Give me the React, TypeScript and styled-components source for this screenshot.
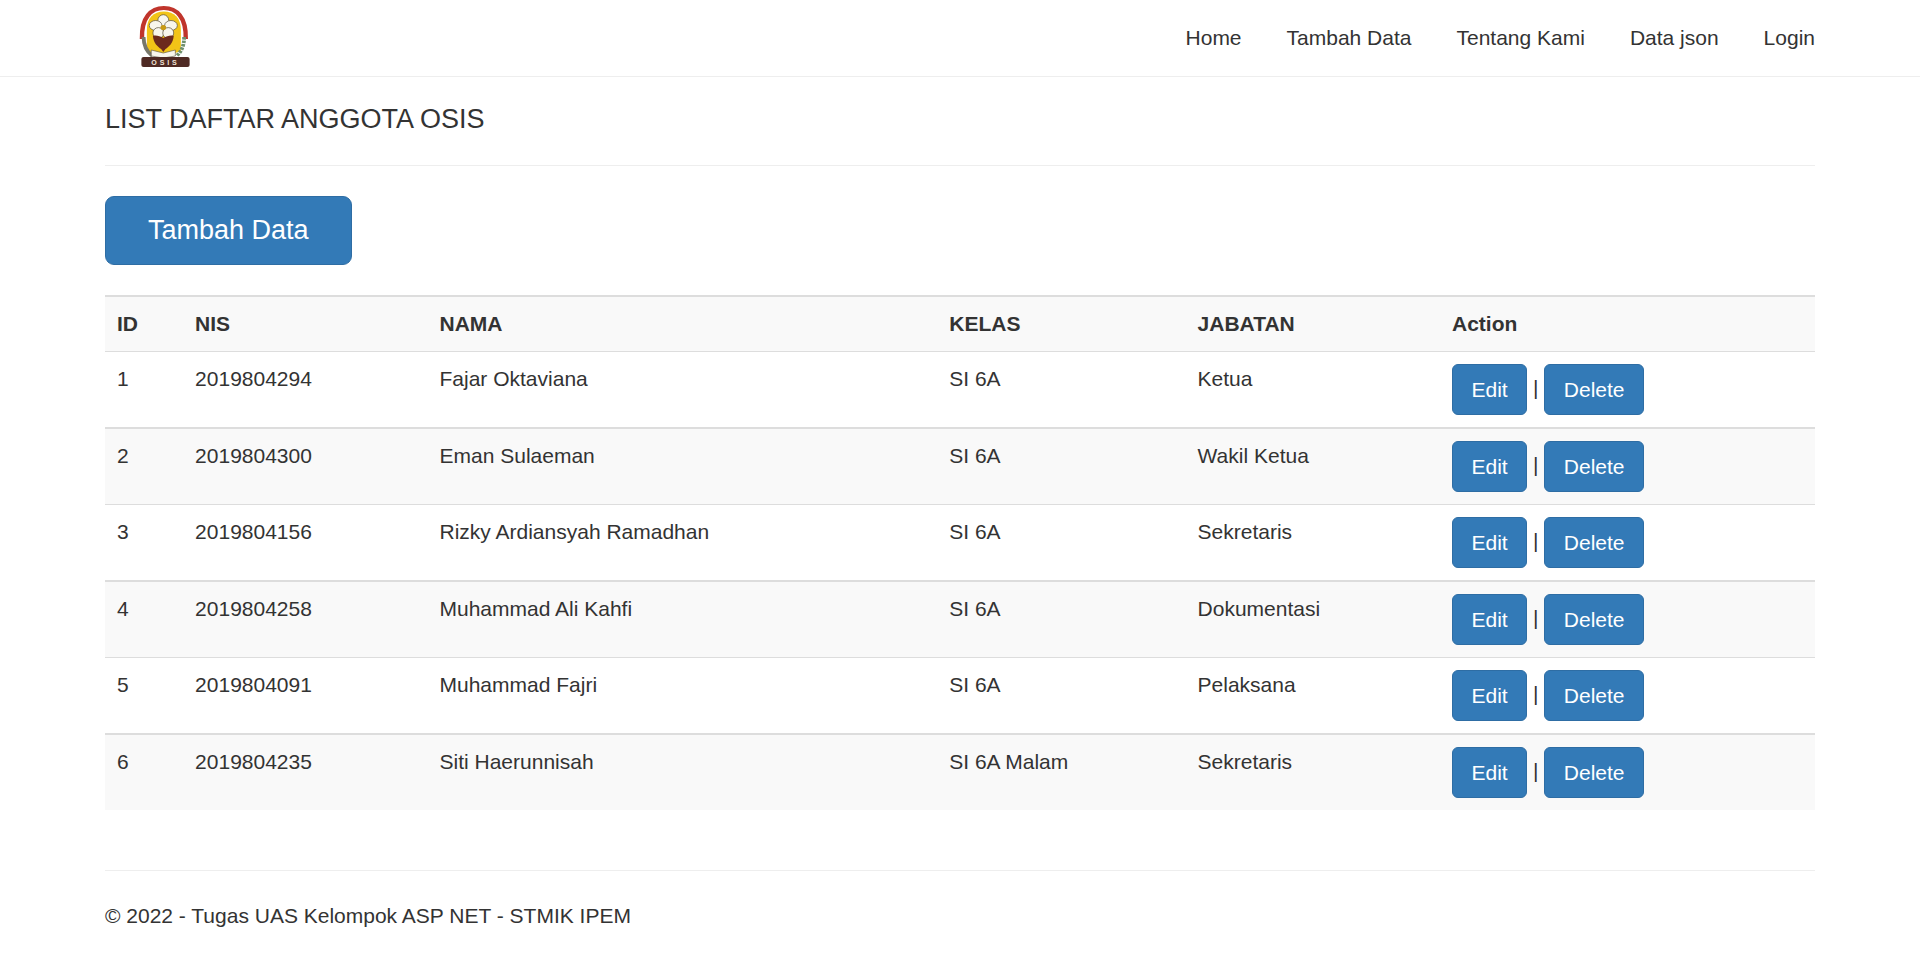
import React from 'react';
import styled, { createGlobalStyle } from 'styled-components';

const GlobalStyle = createGlobalStyle`
  html, body { margin: 0; padding: 0; background: #fff; }
  body {
    font-family: "Liberation Sans", Arial, sans-serif;
    font-size: 21px;
    line-height: 30px;
    color: #333;
  }
  * { box-sizing: border-box; }
`;

const Navbar = styled.nav`
  height: 77px;
  border-bottom: 1px solid #eee;
`;

const NavInner = styled.div`
  width: 1755px;
  height: 76px;
  margin: 0 auto;
  padding: 0 22.5px;
  display: flex;
  justify-content: space-between;
`;

const Brand = styled.a`
  display: block;
  width: 95px;
  height: 76px;
  padding: 5px 0 0 31.5px;
`;

const NavList = styled.ul`
  display: flex;
  gap: 45px;
  margin: 0;
  padding: 0;
  list-style: none;
`;

const NavLink = styled.a`
  display: block;
  padding: 23px 0;
  color: #333;
`;

const Container = styled.main`
  width: 1755px;
  margin: 0 auto;
  padding: 0 22.5px;
`;

const Title = styled.h4`
  margin: 27px 0 31px;
  font-size: 27px;
  font-weight: 400;
  line-height: 30px;
`;

const Rule = styled.hr`
  height: 1px;
  margin: 0;
  border: 0;
  background: #eee;
`;

const Button = styled.a<{ $large?: boolean }>`
  display: inline-block;
  padding: ${p => (p.$large ? '15px 42px' : '9.5px 18.5px')};
  font-size: ${p => (p.$large ? '27px' : '21px')};
  line-height: ${p => (p.$large ? '37px' : '30px')};
  color: #fff;
  background: #337ab7;
  border: 1px solid #2e6da4;
  border-radius: ${p => (p.$large ? '9px' : '6px')};
  vertical-align: middle;
`;

const Toolbar = styled.div`
  margin: 30px 0;
  height: 69px;
`;

const Table = styled.table`
  width: 100%;
  border-collapse: separate;
  border-spacing: 0;
`;

const HeadRow = styled.tr`
  background: #f9f9f9;
`;

const HeadCell = styled.th`
  padding: 12px;
  text-align: left;
  font-weight: 700;
  vertical-align: bottom;
  border-top: 2px solid #ddd;
  border-bottom: 1px solid #ddd;
`;

const Row = styled.tr<{ $striped: boolean }>`
  background: ${p => (p.$striped ? '#f9f9f9' : '#fff')};
`;

/* the lines alternate 1 and 2px, like the 1.5px lines of a page at 150% */
const Cell = styled.td<{ $line: number }>`
  padding: 12px;
  vertical-align: top;
  border-top: ${p => p.$line}px solid #ddd;
`;

const Footer = styled.footer`
  margin-top: 60px;
`;

const FooterText = styled.p`
  margin: 0;
  padding-top: 30px;
`;

const Logo = () => (
  <svg width="57" height="64" viewBox="0 0 52 64" preserveAspectRatio="none" aria-label="Logo OSIS">
    <path d="M4.5 34 C4 12 13 3 24.5 3 C36 3 45 12 44.5 34" fill="none" stroke="#c0352c" strokeWidth="4" />
    <path d="M9 46 V25 C9 13 15 6.5 24.5 6.5 C34 6.5 40 13 40 25 V46 L24.5 52 Z" fill="#f2c417" />
    <path d="M6 32 C6 40 8 46 14 51" fill="none" stroke="#77776a" strokeWidth="3.5" />
    <path d="M43 32 C43 40 41 46 36 51" fill="none" stroke="#6e8f6c" strokeWidth="3.5" strokeDasharray="2.5 1" />
    <g fill="#f8f6ec" stroke="#5a5240" strokeWidth="0.7">
      <ellipse cx="24" cy="15.5" rx="5" ry="5.8" />
      <ellipse cx="17" cy="20.5" rx="5.8" ry="5" />
      <ellipse cx="31" cy="20.5" rx="5.8" ry="5" />
      <ellipse cx="19.5" cy="28" rx="5" ry="5.4" />
      <ellipse cx="28.5" cy="28" rx="5" ry="5.4" />
    </g>
    <circle cx="24" cy="22.5" r="2.6" fill="#c99a12" />
    <path d="M24 33 C21 31 17 30 14.5 31 C15 38 19 42 22 44 L24 47 L26 44 C29 42 33 38 33.5 31 C31 30 27 31 24 33 Z" fill="#6c2a1d" />
    <path d="M13 45 L24 48 L35 45 V51 L24 53 L13 51 Z" fill="#f8f6ec" stroke="#5a5240" strokeWidth="0.6" />
    <rect x="4" y="52" width="44" height="10" rx="2" fill="#4f2a24" />
    <text x="26" y="60" textAnchor="middle" fontSize="6.5" fontWeight="700" letterSpacing="2.6" fill="#efe3d6">OSIS</text>
  </svg>
);

const members = [
  { id: 1, nis: '2019804294', nama: 'Fajar Oktaviana', kelas: 'SI 6A', jabatan: 'Ketua' },
  { id: 2, nis: '2019804300', nama: 'Eman Sulaeman', kelas: 'SI 6A', jabatan: 'Wakil Ketua' },
  { id: 3, nis: '2019804156', nama: 'Rizky Ardiansyah Ramadhan', kelas: 'SI 6A', jabatan: 'Sekretaris' },
  { id: 4, nis: '2019804258', nama: 'Muhammad Ali Kahfi', kelas: 'SI 6A', jabatan: 'Dokumentasi' },
  { id: 5, nis: '2019804091', nama: 'Muhammad Fajri', kelas: 'SI 6A', jabatan: 'Pelaksana' },
  { id: 6, nis: '2019804235', nama: 'Siti Haerunnisah', kelas: 'SI 6A Malam', jabatan: 'Sekretaris' },
];

const navItems = ['Home', 'Tambah Data', 'Tentang Kami', 'Data json', 'Login'];

export default function App() {
  return (
    <>
      <GlobalStyle />
      <Navbar>
        <NavInner>
          <Brand><Logo /></Brand>
          <NavList>
            {navItems.map(item => (
              <li key={item}><NavLink>{item}</NavLink></li>
            ))}
          </NavList>
        </NavInner>
      </Navbar>
      <Container>
        <Title>LIST DAFTAR ANGGOTA OSIS</Title>
        <Rule />
        <Toolbar><Button $large>Tambah Data</Button></Toolbar>
        <Table>
          <thead>
            <HeadRow>
              <HeadCell>ID</HeadCell>
              <HeadCell>NIS</HeadCell>
              <HeadCell>NAMA</HeadCell>
              <HeadCell>KELAS</HeadCell>
              <HeadCell>JABATAN</HeadCell>
              <HeadCell>Action</HeadCell>
            </HeadRow>
          </thead>
          <tbody>
            {members.map((m, i) => {
              const line = i === 0 ? 0 : i % 2 === 1 ? 2 : 1;
              return (
                <Row key={m.id} $striped={i % 2 === 1}>
                  <Cell $line={line}>{m.id}</Cell>
                  <Cell $line={line}>{m.nis}</Cell>
                  <Cell $line={line}>{m.nama}</Cell>
                  <Cell $line={line}>{m.kelas}</Cell>
                  <Cell $line={line}>{m.jabatan}</Cell>
                  <Cell $line={line}><Button>Edit</Button> | <Button>Delete</Button></Cell>
                </Row>
              );
            })}
          </tbody>
        </Table>
        <Footer>
          <Rule />
          <FooterText>© 2022 - Tugas UAS Kelompok ASP NET - STMIK IPEM</FooterText>
        </Footer>
      </Container>
    </>
  );
}
